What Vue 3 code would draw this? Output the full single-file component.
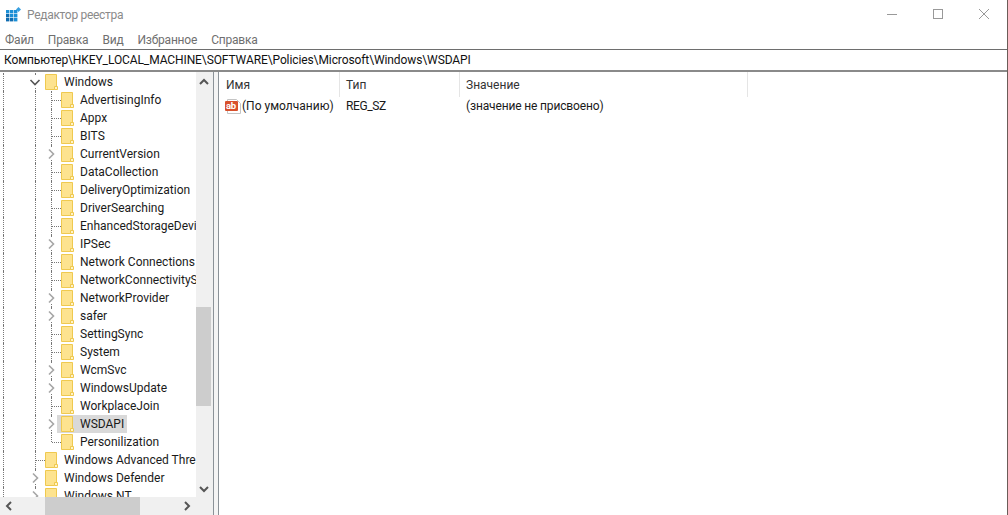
<template>
  <div class="window">
    <div class="titlebar">
      <svg class="app-icon" width="16" height="15" viewBox="0 0 16 15">
        <rect x="0" y="3" width="3.4" height="3.4" fill="#1b8fd6" />
        <rect x="4" y="3" width="3.4" height="3.4" fill="#1b8fd6" />
        <rect x="8" y="3" width="3.4" height="3.4" fill="#1b8fd6" />
        <rect x="0" y="7" width="3.4" height="3.4" fill="#0f6cb0" />
        <rect x="4" y="7" width="3.4" height="3.4" fill="#1b8fd6" />
        <rect x="8" y="7" width="3.4" height="3.4" fill="#1b8fd6" />
        <rect x="0" y="11" width="3.4" height="3.4" fill="#0f6cb0" />
        <rect x="4" y="11" width="3.4" height="3.4" fill="#0f6cb0" />
        <rect x="8" y="11" width="3.4" height="3.4" fill="#1b8fd6" />
        <path d="M12.5 0 L15 2.5 L12.5 5 L10 2.5 Z" fill="#3aa0e0" />
      </svg>
      <span class="title">Редактор реестра</span>
      <div class="win-btns">
        <svg width="46" height="30" viewBox="0 0 46 30"><path d="M18 14.5H28" stroke="#999" /></svg>
        <svg width="46" height="30" viewBox="0 0 46 30"><rect x="18.5" y="9.5" width="9" height="9" fill="none" stroke="#999" /></svg>
        <svg width="46" height="30" viewBox="0 0 46 30"><path d="M18 9L28 19M28 9L18 19" stroke="#999" /></svg>
      </div>
    </div>

    <div class="menubar">
      <span v-for="m in menu" :key="m">{{ m }}</span>
    </div>

    <div class="address">Компьютер\HKEY_LOCAL_MACHINE\SOFTWARE\Policies\Microsoft\Windows\WSDAPI</div>

    <div class="main">
      <div class="tree-pane">
        <div class="tree-top">
          <div class="tree">
            <div v-for="row in rows" :key="row.name" class="row">
              <span class="col guide"></span>
              <span class="col"></span>
              <span class="col guide" :class="{ short: row.level === 0 }">
                <span v-if="row.level === 0 && !row.arrow" class="hline"></span>
                <svg v-if="row.level === 0 && row.arrow" class="chevron" width="12" height="12" viewBox="0 0 12 12">
                  <path :d="row.arrow === 'open' ? 'M1.5 4L6 8.5L10.5 4' : 'M4 1.5L8.5 6L4 10.5'" fill="none" :stroke="row.arrow === 'open' ? '#555' : '#a6a6a6'" stroke-width="1.6" />
                </svg>
              </span>
              <span v-if="row.level === 1" class="col guide short" :class="{ end: row.last }">
                <span v-if="!row.arrow" class="hline"></span>
                <svg v-else class="chevron" width="12" height="12" viewBox="0 0 12 12">
                  <path d="M4 1.5L8.5 6L4 10.5" fill="none" stroke="#a6a6a6" stroke-width="1.6" />
                </svg>
              </span>
              <span class="node" :class="{ selected: row.selected }">
                <svg class="folder" width="14" height="18" viewBox="0 0 14 18">
                  <path d="M0.5 1.5H11.5V13.5L9.5 16.5H0.5Z" fill="#fde38f" stroke="#efc94f" />
                  <path d="M9.5 13.5H12.5V16.5H9.5Z" fill="#fff3c9" stroke="#efc94f" />
                </svg>
                <span class="label">{{ row.name }}</span>
              </span>
            </div>
          </div>
          <div class="vscroll">
            <svg class="arrow" width="17" height="18" viewBox="0 0 17 18"><path d="M4 12L8 8L12 12" fill="none" stroke="#555" stroke-width="2" /></svg>
            <div class="vtrack"><div class="vthumb"></div></div>
            <svg class="arrow" width="17" height="18" viewBox="0 0 17 18"><path d="M4 8L8 12L12 8" fill="none" stroke="#555" stroke-width="2" /></svg>
          </div>
        </div>
        <div class="hscroll">
          <svg width="17" height="18" viewBox="0 0 17 18"><path d="M11 5L7 9L11 13" fill="none" stroke="#555" stroke-width="2" /></svg>
          <div class="htrack"><div class="hthumb"></div></div>
          <svg width="17" height="18" viewBox="0 0 17 18"><path d="M6 5L10 9L6 13" fill="none" stroke="#555" stroke-width="2" /></svg>
        </div>
      </div>

      <div class="splitter"></div>

      <div class="list-pane">
        <div class="list-head">
          <span class="h-name">Имя</span>
          <span class="h-type">Тип</span>
          <span class="h-value">Значение</span>
        </div>
        <div class="list-row">
          <span class="c-name">
            <svg class="reg-icon" width="16" height="15" viewBox="0 0 16 15">
              <path d="M2.5 0.5H11.5L15.5 4.5V14.5H2.5Z" fill="#fff" stroke="#c4c4c4" />
              <rect x="0" y="2" width="13" height="10" rx="1" fill="#d8502c" />
              <text x="1" y="10" class="ab">ab</text>
            </svg>
            <span>(По умолчанию)</span>
          </span>
          <span class="c-type">REG_SZ</span>
          <span class="c-value">(значение не присвоено)</span>
        </div>
      </div>
    </div>
  </div>
</template>

<script setup>
const menu = ['Файл', 'Правка', 'Вид', 'Избранное', 'Справка']

const rows = [
  { name: 'Windows', level: 0, arrow: 'open' },
  { name: 'AdvertisingInfo', level: 1 },
  { name: 'Appx', level: 1 },
  { name: 'BITS', level: 1 },
  { name: 'CurrentVersion', level: 1, arrow: true },
  { name: 'DataCollection', level: 1 },
  { name: 'DeliveryOptimization', level: 1 },
  { name: 'DriverSearching', level: 1 },
  { name: 'EnhancedStorageDevices', level: 1 },
  { name: 'IPSec', level: 1, arrow: true },
  { name: 'Network Connections', level: 1 },
  { name: 'NetworkConnectivityStatus', level: 1 },
  { name: 'NetworkProvider', level: 1, arrow: true },
  { name: 'safer', level: 1, arrow: true },
  { name: 'SettingSync', level: 1 },
  { name: 'System', level: 1 },
  { name: 'WcmSvc', level: 1, arrow: true },
  { name: 'WindowsUpdate', level: 1, arrow: true },
  { name: 'WorkplaceJoin', level: 1 },
  { name: 'WSDAPI', level: 1, arrow: true, selected: true },
  { name: 'Personilization', level: 1, last: true },
  { name: 'Windows Advanced Threat Protection', level: 0 },
  { name: 'Windows Defender', level: 0, arrow: true },
  { name: 'Windows NT', level: 0, arrow: true }
]
</script>

<style>
html,
body {
  margin: 0;
  background: #fff;
  overflow: hidden;
}
</style>

<style scoped>
.window {
  width: 1007px;
  height: 515px;
  display: flex;
  flex-direction: column;
  background: #fff;
  border-right: 1px solid #6b5c58;
  font-family: Roboto, "Liberation Sans", sans-serif;
  font-size: 12px;
  color: #1a1a1a;
  overflow: hidden;
}

.titlebar {
  height: 30px;
  display: flex;
  align-items: center;
  padding-left: 6px;
  flex: none;
}

.app-icon {
  margin-right: 5px;
  margin-top: -1px;
}

.title {
  color: #8a8a8a;
  letter-spacing: -0.3px;
}

.win-btns {
  margin-left: auto;
  display: flex;
}

.menubar {
  height: 19px;
  display: flex;
  align-items: center;
  gap: 14px;
  padding-left: 5px;
  color: #6f6f6f;
  letter-spacing: -0.2px;
  flex: none;
}

.address {
  height: 20px;
  line-height: 21px;
  padding-left: 4px;
  border-top: 1px solid #6e6e6e;
  border-bottom: 2px solid #8a8a8a;
  letter-spacing: -0.1px;
  flex: none;
  color: #111;
}

.main {
  flex: 1;
  display: flex;
  min-height: 0;
}

.tree-pane {
  width: 213px;
  flex: none;
  display: flex;
  flex-direction: column;
}

.tree-top {
  flex: 1;
  display: flex;
  min-height: 0;
}

.tree {
  width: 196px;
  padding-top: 1px;
  overflow: hidden;
  flex: none;
}

.row {
  height: 18px;
  display: flex;
  white-space: nowrap;
  padding-left: 3px;
}

.col {
  position: relative;
  width: 16px;
  flex: none;
}

.guide {
  border-left: 1px dotted #777;
  width: 15px;
}

.short {
  width: 9px;
}

.short.end {
  height: 9px;
}

.hline {
  position: absolute;
  left: 0;
  top: 9px;
  width: 9px;
  border-top: 1px dotted #777;
}

.chevron {
  position: absolute;
  left: -7px;
  top: 3px;
  background: #fff;
}

.node {
  display: flex;
  align-items: center;
  margin-left: -4px;
  padding: 0 3px 0 4px;
  height: 18px;
}

.selected {
  background: #d9d9d9;
}

.folder {
  flex: none;
  margin-right: 5px;
}

.label {
  color: #1a1a1a;
}

.vscroll {
  width: 17px;
  background: #f0f0f0;
  display: flex;
  flex-direction: column;
  flex: none;
}

.vtrack {
  flex: 1;
  padding-top: 217px;
}

.vthumb {
  width: 15px;
  height: 99px;
  background: #cdcdcd;
}

.hscroll {
  height: 18px;
  background: #f0f0f0;
  display: flex;
  padding-right: 17px;
  flex: none;
}

.htrack {
  flex: 1;
  padding-left: 28px;
}

.hthumb {
  width: 95px;
  height: 18px;
  background: #cdcdcd;
}

.splitter {
  width: 4px;
  flex: none;
  background: #f4f4f4;
  border-left: 1px solid #8b9298;
  border-right: 1px solid #8b9298;
}

.list-pane {
  flex: 1;
  min-width: 0;
}

.list-head {
  height: 25px;
  display: flex;
  align-items: center;
  color: #333;
}

.h-name,
.h-type,
.h-value {
  height: 25px;
  line-height: 26px;
  padding-left: 6px;
  border-right: 1px solid #e5e5e5;
}

.h-name {
  width: 113px;
  padding-left: 7px;
}

.h-type {
  width: 113px;
}

.h-value {
  width: 281px;
}

.list-row {
  height: 18px;
  display: flex;
  align-items: center;
  padding-left: 6px;
}

.c-name {
  width: 121px;
  display: flex;
  align-items: center;
  gap: 1px;
  white-space: nowrap;
}

.reg-icon {
  margin-top: 1px;
  flex: none;
}

.c-type {
  width: 120px;
  letter-spacing: -0.4px;
}

.c-value {
  letter-spacing: -0.15px;
}

.ab {
  font-size: 9.5px;
  font-weight: 700;
  fill: #fff;
  letter-spacing: -0.3px;
  font-family: Roboto, sans-serif;
}
</style>
